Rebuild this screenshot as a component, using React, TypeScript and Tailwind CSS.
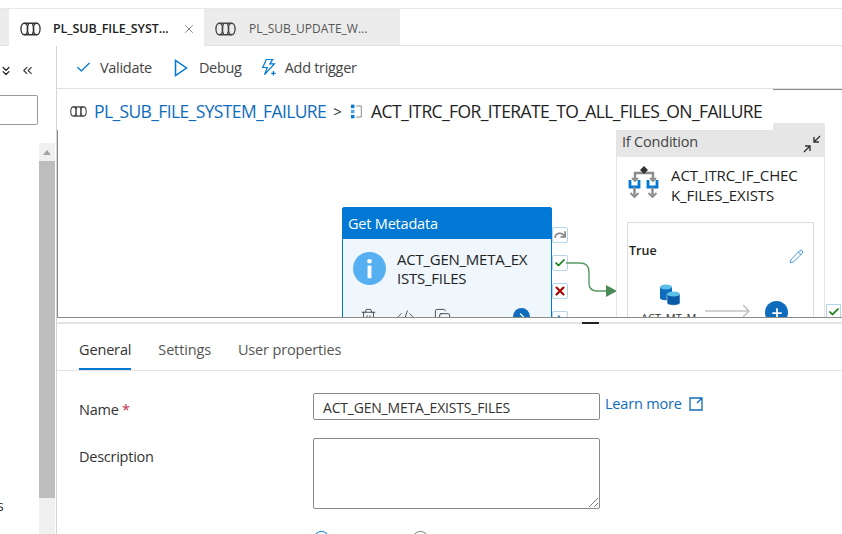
import { ChevronsDown, ChevronsLeft, Check, X, Pencil, Trash2, Code2, Copy, Plus, ChevronRight } from "lucide-react";

const font = { fontFamily: '"Open Sans", "Noto Sans", sans-serif' };

function PipelineIcon({ className }: { className?: string }) {
  return (
    <svg viewBox="0 0 22 14" className={className} fill="none" stroke="currentColor" strokeWidth="1.4">
      <ellipse cx="4.5" cy="7" rx="3.5" ry="6" />
      <ellipse cx="17.5" cy="7" rx="3.5" ry="6" />
      <path d="M4.5 1h13M4.5 13h13M9 1.5c-1.5 3-1.5 8 0 11M13 1.5c1.5 3 1.5 8 0 11" />
    </svg>
  );
}

function ActivityIcon() {
  return (
    <svg viewBox="0 0 14 16" className="w-[12px] h-[15px]" fill="none">
      <rect x="0" y="0" width="4" height="4" fill="#0078d4" />
      <rect x="0" y="6" width="4" height="4" fill="#50a8e8" />
      <rect x="0" y="12" width="4" height="4" fill="#0078d4" />
      <path d="M6 1.5h6v13H6" stroke="#777" strokeWidth="1" />
    </svg>
  );
}

function DebugIcon() {
  return (
    <svg viewBox="0 0 14 18" className="w-[14px] h-[18px]" fill="none" stroke="#0078d4" strokeWidth="1.5">
      <path d="M1.5 1.5v15L12.5 9z" />
    </svg>
  );
}

function TriggerIcon() {
  return (
    <svg viewBox="0 0 18 20" className="w-[16px] h-[19px]" fill="none" stroke="#0078d4" strokeWidth="1.4">
      <path d="M6 1h7l-3 5h5L4 18l3-8H2z" />
      <path d="M14 14v5M11.5 16.5h5" />
    </svg>
  );
}

function IfIcon() {
  return (
    <svg viewBox="0 0 34 34" className="w-[34px] h-[34px]" fill="none">
      <path d="M8 14V8h18v6" stroke="#8a8a8a" strokeWidth="2.4" />
      <path d="M17 1l4 4-4 4-4-4z" fill="#333" />
      <path d="M5 13l3 3 3-3M23 13l3 3 3-3" stroke="#8a8a8a" strokeWidth="1.8" />
      <path d="M3 15v7h9v-7M21 15v7h9v-7" stroke="#0078d4" strokeWidth="2.8" />
      <path d="M7.5 22v8M25.5 22v8" stroke="#8a8a8a" strokeWidth="2.4" />
      <path d="M3.5 28l4 4 4-4M21.5 28l4 4 4-4" stroke="#8a8a8a" strokeWidth="1.8" />
    </svg>
  );
}

function InfoCircle() {
  return (
    <svg viewBox="0 0 34 34" className="w-[33px] h-[33px] shrink-0">
      <circle cx="17" cy="17" r="17" fill="#55aff0" />
      <circle cx="17" cy="9.5" r="2.4" fill="#fff" />
      <rect x="15" y="14" width="4" height="13" fill="#fff" />
    </svg>
  );
}

function DbIcon() {
  return (
    <svg viewBox="0 0 20 22" className="w-[20px] h-[22px]">
      <path d="M0 3v11c0 3 12 3 12 0V3z" fill="#0f6cbd" />
      <ellipse cx="6" cy="3" rx="6" ry="2.6" fill="#5cc0e8" />
      <path d="M7 10v9c0 3 13 3 13 0v-9z" fill="#0a5ca8" stroke="#fff" strokeWidth=".5" />
      <ellipse cx="13.5" cy="10" rx="6.5" ry="2.6" fill="#5cc0e8" />
    </svg>
  );
}

function SideBtn({ top, children }: { top: number; children?: React.ReactNode }) {
  return (
    <div
      className="absolute left-[495px] w-[16px] h-[16px] bg-white border border-[#b5d5ef] rounded-[2px] flex items-center justify-center"
      style={{ top }}
    >
      {children}
    </div>
  );
}

export default function App() {
  return (
    <div className="w-[842px] h-[534px] overflow-hidden bg-white flex flex-col text-[#333]" style={font}>
      <div className="h-[9px] shrink-0 border-b border-[#e8e8e8]" />

      {/* Tabs */}
      <div className="h-[37px] shrink-0 flex border-b border-[#e1e1e1]">
        <div className="w-[9px] bg-[#ececec]" />
        <div className="w-[195px] bg-white flex items-center pl-[11px] pt-[3px] h-[37px]">
          <PipelineIcon className="w-[21px] h-[14px] text-[#333]" />
          <span className="ml-[12px] text-[12.5px] font-semibold text-[#222] tracking-[-0.1px]">PL_SUB_FILE_SYST...</span>
          <X className="w-[14px] h-[14px] ml-[13px] text-[#555]" strokeWidth={1.2} />
        </div>
        <div className="w-[196px] bg-[#ececec] flex items-center pl-[11px] pt-[3px]">
          <PipelineIcon className="w-[21px] h-[14px] text-[#444]" />
          <span className="ml-[13px] text-[12px] text-[#555]">PL_SUB_UPDATE_W...</span>
        </div>
      </div>

      <div className="flex-1 flex min-h-0">
        {/* Left pane */}
        <div className="w-[57px] shrink-0 border-r border-[#d5d5d5] flex flex-col relative">
          <div className="h-[49px] flex items-center gap-[7px]">
            <ChevronsDown className="w-[14px] h-[14px] -ml-[1px] text-[#222]" strokeWidth={2.2} />
            <ChevronsLeft className="w-[15px] h-[15px] text-[#333]" strokeWidth={1.7} />
          </div>
          <div className="w-[38px] h-[30px] border border-[#999] border-l-0 rounded-r-[2px]" />
          <div className="flex flex-1 mt-[18px] min-h-0">
            <div className="w-[39px] pt-[356px] text-[14px] leading-none text-[#333]">
              <span className="-ml-[3px]">s</span>
            </div>
            <div className="w-[16px] bg-[#f0f0f0] flex flex-col items-center">
              <div className="h-[18px] flex items-center justify-center">
                <div className="w-0 h-0 border-x-[4px] border-x-transparent border-b-[5px] border-b-[#a3a3a3]" />
              </div>
              <div className="w-full h-[337px] bg-[#bdbdbd]" />
            </div>
          </div>
        </div>

        <div className="flex-1 flex flex-col min-w-0">
          {/* Toolbar */}
          <div className="h-[43px] shrink-0 border-b border-[#e0e0e0] flex items-center pl-[18px] pt-[1px] text-[14.5px] text-[#444] tracking-[-0.3px]">
            <Check className="w-[17px] h-[17px] text-[#0078d4]" strokeWidth={1.7} />
            <span className="ml-[8px]">Validate</span>
            <div className="ml-[22px]"><DebugIcon /></div>
            <span className="ml-[11px]">Debug</span>
            <div className="ml-[19px]"><TriggerIcon /></div>
            <span className="ml-[8px]">Add trigger</span>
          </div>

          {/* Canvas */}
          <div className="h-[229px] shrink-0 relative overflow-hidden border-b border-[#8a8a8a]">
            <div className="absolute left-0 top-[41px] bottom-0 w-px bg-[#8a8a8a]" />
            <div className="flex items-center h-[44px] pl-[13px] text-[17.5px] tracking-[-0.62px]">
              <PipelineIcon className="w-[17px] h-[11px] text-[#444]" />
              <span className="ml-[7px] text-[#0f6cbd]">PL_SUB_FILE_SYSTEM_FAILURE</span>
              <span className="ml-[7px] text-[#333] text-[15px]">&gt;</span>
              <span className="ml-[10px]"><ActivityIcon /></span>
              <span className="ml-[8px] text-[#222] tracking-[-0.6px]">ACT_ITRC_FOR_ITERATE_TO_ALL_FILES_ON_FAILURE</span>
            </div>
            <div className="absolute top-0 right-0 w-[69px] h-px bg-[#8a8a8a]" />

            {/* Get Metadata node */}
            <div className="absolute left-[285px] top-[118px] w-[210px] h-[130px] bg-[#eff6fc] border border-[#0078d4] rounded-t-[2px]">
              <div className="h-[31px] bg-[#0078d4] text-white text-[14.5px] tracking-[-0.2px] flex items-center pl-[5px]">Get Metadata</div>
              <div className="flex items-start mt-[11px] pl-[10px]">
                <div className="mt-[2px]"><InfoCircle /></div>
                <div className="ml-[11px] text-[15px] leading-[19px] tracking-[-0.25px] text-[#222]">ACT_GEN_META_EX<br />ISTS_FILES</div>
              </div>
              <div className="flex items-center mt-[20px] pl-[17px] gap-[20px] text-[#444]">
                <Trash2 className="w-[17px] h-[17px]" strokeWidth={1.3} />
                <Code2 className="w-[17px] h-[17px]" strokeWidth={1.3} />
                <Copy className="w-[17px] h-[17px]" strokeWidth={1.3} />
                <div className="ml-[42px] w-[17px] h-[17px] rounded-full bg-[#0f6cbd] flex items-center justify-center">
                  <ChevronRight className="w-[12px] h-[12px] text-white" strokeWidth={2.5} />
                </div>
              </div>
            </div>

            <SideBtn top={138}>
              <svg viewBox="0 0 14 10" className="w-[13px] h-[10px]" fill="none" stroke="#888" strokeWidth="1.8"><path d="M1 8c1-6 8-6 10-2M12 1v6H7" /></svg>
            </SideBtn>
            <SideBtn top={166}><Check className="w-[12px] h-[12px] text-[#107c10]" strokeWidth={3.5} /></SideBtn>
            <SideBtn top={194}><X className="w-[14px] h-[14px] text-[#a80000]" strokeWidth={3.5} /></SideBtn>
            <SideBtn top={222}><ChevronRight className="w-[12px] h-[12px] text-[#0078d4]" strokeWidth={3} /></SideBtn>

            {/* connector */}
            <svg className="absolute left-[509px] top-[170px] w-[52px] h-[40px]" viewBox="0 0 52 40" fill="none">
              <path d="M0 4h14c6 0 9 3 9 9v11c0 5 3 8 8 8h10" stroke="#5b9a68" strokeWidth="1.4" />
              <path d="M40 26l11 6-11 6z" fill="#4b8b58" />
            </svg>

            {/* If Condition */}
            <div className="absolute left-[716px] top-[34px] w-[52px] h-[8px] bg-[#e6e6e6] rounded-t-[2px]" />
            <div className="absolute left-[559px] top-[41px] w-[209px] h-[200px] bg-white border border-[#e4e4e4]">
              <div className="h-[26px] bg-[#e6e6e6] flex items-center justify-between pl-[5px] pr-[2px] text-[14.5px] tracking-[-0.2px] text-[#444]">
                <span className="-mt-[4px]">If Condition</span>
                <svg viewBox="0 0 20 20" className="w-[20px] h-[20px]" fill="none" stroke="#333" strokeWidth="1.4">
                  <path d="M18 2l-6 6M12 3v5h5M2 18l6-6M3 12h5v5" />
                </svg>
              </div>
              <div className="flex mt-[8px] pl-[10px]">
                <IfIcon />
                <div className="ml-[10px] text-[15px] leading-[20px] tracking-[-0.1px] text-[#222]">ACT_ITRC_IF_CHEC<br />K_FILES_EXISTS</div>
              </div>
              <div className="mx-[10px] mt-[17px] h-[120px] border border-[#dcdcdc] relative">
                <div className="flex items-start justify-between pl-[1px] pr-[9px] pt-[19px]">
                  <span className="text-[12.5px] font-semibold text-[#222]">True</span>
                  <Pencil className="w-[15px] h-[15px] mt-[7px] text-[#2b88d8]" strokeWidth={1.4} />
                </div>
                <div className="absolute left-[32px] top-[61px]"><DbIcon /></div>
                <div className="absolute left-[13px] top-[87px] text-[11px] text-[#333]">ACT_MT_M</div>
                <svg className="absolute left-[77px] top-[81px] w-[46px] h-[14px]" viewBox="0 0 46 14" fill="none" stroke="#c4c4c4" strokeWidth="1.6">
                  <path d="M0 7h44M38 1l6 6-6 6" />
                </svg>
                <div className="absolute left-[137px] top-[78px] w-[23px] h-[23px] rounded-full bg-[#0f6cbd] flex items-center justify-center">
                  <Plus className="w-[14px] h-[14px] text-white" strokeWidth={3} />
                </div>
              </div>
            </div>
            <div className="absolute left-[769px] top-[215px] w-[15px] h-[15px] bg-white border border-[#b5d5ef] flex items-center justify-center">
              <Check className="w-[12px] h-[12px] text-[#107c10]" strokeWidth={3.5} />
            </div>
          </div>

          {/* Splitter */}
          <div className="h-[6px] shrink-0 relative flex flex-col justify-end">
            <div className="h-[2px] bg-[#e4e4e4]" />
            <div className="absolute left-[525px] bottom-0 w-[17px] h-[2px] bg-[#222]" />
          </div>

          {/* Properties */}
          <div className="flex-1 min-h-0 overflow-hidden">
            <div className="h-[47px] border-b border-[#e4e4e4] flex items-end pl-[22px] gap-[27px] text-[14.5px] tracking-[-0.15px] text-[#555]">
              <div className="h-[31px] border-b-[2px] border-[#0078d4] text-[#333]">General</div>
              <div className="h-[31px]">Settings</div>
              <div className="h-[31px]">User properties</div>
            </div>
            <div className="pl-[22px] pt-[22px]">
              <div className="flex items-start">
                <div className="w-[234px] pt-[6px] text-[14.5px] tracking-[-0.25px] text-[#333]">
                  Name <span className="text-[#c4314b]">*</span>
                </div>
                <div className="w-[287px] h-[27px] border border-[#8a8a8a] rounded-[2px] flex items-center pl-[9px] pt-[2px] text-[14px] tracking-[-0.2px] text-[#333]">
                  ACT_GEN_META_EXISTS_FILES
                </div>
                <div className="ml-[5px] flex items-center text-[#0f6cbd] text-[14.5px] tracking-[-0.2px]">
                  <span>Learn more</span>
                  <svg viewBox="0 0 14 14" className="w-[14px] h-[14px] ml-[7px]" fill="none" stroke="#0f6cbd" strokeWidth="1.3">
                    <path d="M13 1H1v12h12V1zM13 1L8 6" />
                  </svg>
                </div>
              </div>
              <div className="flex items-start mt-[17px]">
                <div className="w-[234px] pt-[8px] text-[14.5px] tracking-[-0.25px] text-[#333]">Description</div>
                <div className="w-[287px] h-[71px] border border-[#8a8a8a] rounded-[2px] relative">
                  <svg className="absolute right-[1px] bottom-[1px] w-[9px] h-[9px]" viewBox="0 0 9 9" fill="none" stroke="#777" strokeWidth="1">
                    <path d="M0 9l9-9M5 9l4-4" />
                  </svg>
                </div>
              </div>
              <div className="flex items-start mt-[22px]">
                <div className="w-[234px]" />
                <div className="w-[17px] h-[17px] rounded-full border border-[#0078d4]" />
                <div className="ml-[82px] w-[17px] h-[17px] rounded-full border border-[#777]" />
              </div>
            </div>
          </div>
        </div>
      </div>
    </div>
  );
}
